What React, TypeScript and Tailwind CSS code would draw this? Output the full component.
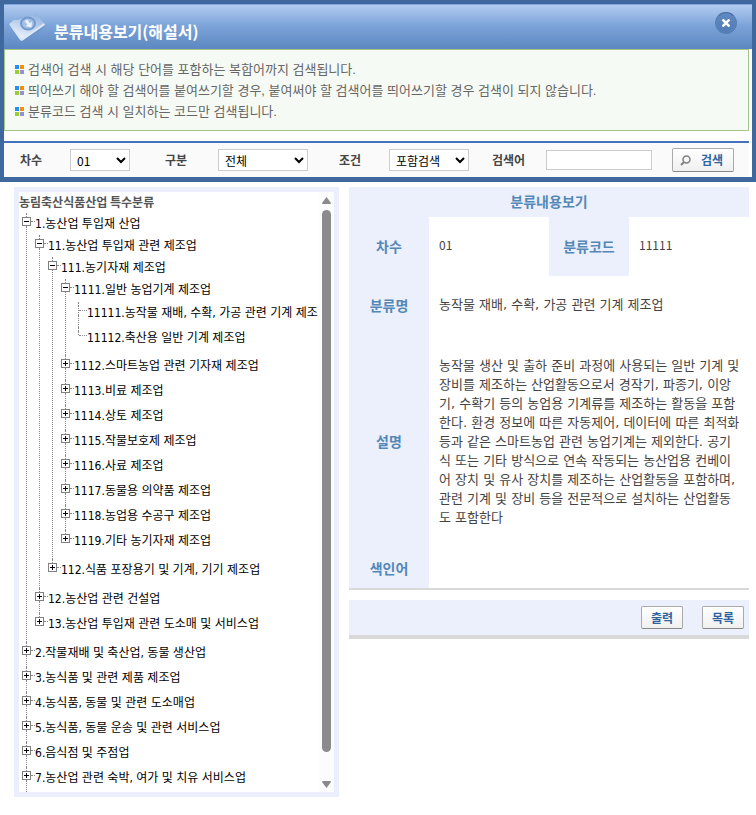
import { useState } from 'react';
import clsx from 'clsx';

type TreeNode = {
  code: string;
  name: string;
  leaf?: boolean;
  children?: TreeNode[];
};

const NOTICES = [
  '검색어 검색 시 해당 단어를 포함하는 복합어까지 검색됩니다.',
  '띄어쓰기 해야 할 검색어를 붙여쓰기할 경우, 붙여써야 할 검색어를 띄어쓰기할 경우 검색이 되지 않습니다.',
  '분류코드 검색 시 일치하는 코드만 검색됩니다.',
];

const TREE: TreeNode[] = [
  {
    code: '1',
    name: '농산업 투입재 산업',
    children: [
      {
        code: '11',
        name: '농산업 투입재 관련 제조업',
        children: [
          {
            code: '111',
            name: '농기자재 제조업',
            children: [
              {
                code: '1111',
                name: '일반 농업기계 제조업',
                children: [
                  { code: '11111', name: '농작물 재배, 수확, 가공 관련 기계 제조', leaf: true },
                  { code: '11112', name: '축산용 일반 기계 제조업', leaf: true },
                ],
              },
              { code: '1112', name: '스마트농업 관련 기자재 제조업' },
              { code: '1113', name: '비료 제조업' },
              { code: '1114', name: '상토 제조업' },
              { code: '1115', name: '작물보호제 제조업' },
              { code: '1116', name: '사료 제조업' },
              { code: '1117', name: '동물용 의약품 제조업' },
              { code: '1118', name: '농업용 수공구 제조업' },
              { code: '1119', name: '기타 농기자재 제조업' },
            ],
          },
          { code: '112', name: '식품 포장용기 및 기계, 기기 제조업' },
        ],
      },
      { code: '12', name: '농산업 관련 건설업' },
      { code: '13', name: '농산업 투입재 관련 도소매 및 서비스업' },
    ],
  },
  { code: '2', name: '작물재배 및 축산업, 동물 생산업' },
  { code: '3', name: '농식품 및 관련 제품 제조업' },
  { code: '4', name: '농식품, 동물 및 관련 도소매업' },
  { code: '5', name: '농식품, 동물 운송 및 관련 서비스업' },
  { code: '6', name: '음식점 및 주점업' },
  { code: '7', name: '농산업 관련 숙박, 여가 및 치유 서비스업' },
];

const DESCRIPTION = [
  '농작물 생산 및 출하 준비 과정에 사용되는 일반 기계 및',
  '장비를 제조하는 산업활동으로서 경작기, 파종기, 이앙',
  '기, 수확기 등의 농업용 기계류를 제조하는 활동을 포함',
  '한다. 환경 정보에 따른 자동제어, 데이터에 따른 최적화',
  '등과 같은 스마트농업 관련 농업기계는 제외한다. 공기',
  '식 또는 기타 방식으로 연속 작동되는 농산업용 컨베이',
  '어 장치 및 유사 장치를 제조하는 산업활동을 포함하며,',
  '관련 기계 및 장비 등을 전문적으로 설치하는 산업활동',
  '도 포함한다',
];

function FolderIcon() {
  return (
    <svg width="36" height="30" viewBox="0 0 36 30" aria-hidden="true">
      <defs>
        <linearGradient id="folder" x1="0.200" y1="1" x2="0.700" y2="0">
          <stop offset="0" stopColor="#f4f8fd" />
          <stop offset="0.450" stopColor="#c5d8f0" />
          <stop offset="1" stopColor="#93b5e2" />
        </linearGradient>
      </defs>
      <path d="M13 30 L36 15 L35 11 L12 25 Z" fill="#5f88c0" opacity="0.5" />
      <path d="M0 12 L5 8 L9 8 L27 2 L35 11 L13 27 Z" fill="url(#folder)" />
      <path d="M0 12 L13 26 L35 11 L36 13 L13 29 L11 28 Z" fill="#dce8f7" />
      <ellipse cx="19" cy="11.500" rx="7" ry="6" fill="#a4c0e6" stroke="#7399cf" strokeWidth="2" />
      <path d="M15.500 9 L18.500 7.500 L20.500 11 L23 10 L22.500 15.500 L16.500 14 L18.500 12.500 Z" fill="#eaf1fa" />
    </svg>
  );
}

function Bullet() {
  return (
    <svg width="9" height="9" viewBox="0 0 9 9" className="shrink-0" aria-hidden="true">
      <rect width="4" height="4" fill="#1e90ff" />
      <rect x="5" width="4" height="4" fill="#ff8c00" />
      <rect y="5" width="4" height="4" fill="#9acd32" />
      <rect x="5" y="5" width="4" height="4" fill="#9590d5" />
    </svg>
  );
}

function SearchIcon() {
  return (
    <svg width="11" height="11" viewBox="0 0 11 11" fill="none" stroke="#808080" aria-hidden="true">
      <circle cx="6.500" cy="4.500" r="3.500" strokeWidth="1.500" />
      <path d="M4 7 L1 10" strokeWidth="2" />
    </svg>
  );
}

function Branch({ node, last }: { node: TreeNode; last: boolean }) {
  const [open, setOpen] = useState(Boolean(node.children));

  return (
    <li className="flex">
      <div className="flex w-[13px] shrink-0 flex-col">
        <div className="ml-1 h-1 border-l border-dotted border-[#888]" />
        <div className="flex h-[9px] items-center">
          {node.leaf ? (
            <>
              <span className={clsx('ml-1 border-l border-dotted border-[#888]', last ? 'h-1 self-start' : 'h-full')} />
              <span className="flex-1 border-t border-dotted border-[#888]" />
            </>
          ) : (
            <>
              <button type="button" aria-label={`${node.code} ${open ? '접기' : '펼치기'}`} onClick={() => setOpen(!open)}>
                <svg width="9" height="9" viewBox="0 0 9 9" className="block" shapeRendering="crispEdges">
                  <rect width="9" height="9" fill="#808080" />
                  <rect x="1" y="1" width="7" height="7" fill="#fff" />
                  <rect x="2" y="4" width="5" height="1" fill="#000" />
                  {!(open && node.children) && <rect x="4" y="2" width="1" height="5" fill="#000" />}
                </svg>
              </button>
              <span className="flex-1 border-t border-dotted border-[#888]" />
            </>
          )}
        </div>
        {!last && <div className="ml-1 flex-1 border-l border-dotted border-[#888]" />}
      </div>
      <div className={clsx(!node.children && 'pb-[3px]')}>
        <a href="#" className="block whitespace-nowrap leading-[22px]">
          {node.code}.{node.name}
        </a>
        {open && node.children && (
          <ul className={node.children[0].leaf ? 'pt-px pb-[3px]' : 'pb-1'}>
            {node.children.map((child, i) => (
              <Branch key={child.code} node={child} last={i === node.children!.length - 1} />
            ))}
          </ul>
        )}
      </div>
    </li>
  );
}

function SearchForm() {
  const control = 'h-[22px] border border-[#ccc] bg-white pl-[2px] text-black';
  const label = 'shrink-0 font-bold text-[#444]';

  return (
    <form
      className="flex items-center border-t-2 border-[#4472bd] bg-[#fafafa] pt-[5px] pb-[5px] pl-4"
      onSubmit={(e) => e.preventDefault()}
    >
      <label htmlFor="level" className={clsx(label, 'w-[50px]')}>차수</label>
      <select id="level" className={clsx(control, 'w-[60px]')}>
        <option>01</option>
      </select>
      <label htmlFor="section" className={clsx(label, 'ml-[35px] w-[53px]')}>구분</label>
      <select id="section" className={clsx(control, 'w-[90px]')}>
        <option>전체</option>
      </select>
      <label htmlFor="condition" className={clsx(label, 'ml-[31px] w-[50px]')}>조건</label>
      <select id="condition" className={clsx(control, 'w-[80px]')}>
        <option>포함검색</option>
      </select>
      <label htmlFor="keyword" className={clsx(label, 'ml-[23px] w-[54px]')}>검색어</label>
      <input id="keyword" type="text" className="h-5 w-[106px] border border-[#ccc] bg-white px-1" />
      <button
        type="submit"
        className="ml-5 flex h-[24px] w-[62px] items-center justify-between rounded-xs border border-[#aaa] border-b-[#888] bg-linear-to-b from-white to-[#f0f0f0] pr-[10px] pl-[7px] font-bold text-[#2f659f]"
      >
        <SearchIcon />
        검색
      </button>
    </form>
  );
}

function Detail() {
  const head = 'bg-[#ecf0fd] pb-[2px] text-center text-sm font-bold text-[#5488b8]';
  const cell = "px-[10px] pb-[2px] font-['DejaVu_Sans','Noto_Sans_CJK_KR',sans-serif] text-[13px] leading-[19px] text-[#444]";
  const code = 'px-[10px] pb-1 text-xs text-[#444]';

  return (
    <table className="w-full table-fixed border-collapse border-b-2 border-[#d9d9d9]">
      <colgroup>
        <col className="w-20" />
        <col />
        <col className="w-20" />
        <col />
      </colgroup>
      <tbody>
        <tr className="h-[30px]">
          <th colSpan={4} className={head}>분류내용보기</th>
        </tr>
        <tr className="h-[59px]">
          <th scope="row" className={head}>차수</th>
          <td className={code}>01</td>
          <th scope="row" className={head}>분류코드</th>
          <td className={code}>11111</td>
        </tr>
        <tr className="h-[59px]">
          <th scope="row" className={head}>분류명</th>
          <td colSpan={3} className={cell}>농작물 재배, 수확, 가공 관련 기계 제조업</td>
        </tr>
        <tr className="h-[214px]">
          <th scope="row" className={head}>설명</th>
          <td colSpan={3} className={clsx(cell, 'whitespace-pre')}>{DESCRIPTION.join('\n')}</td>
        </tr>
        <tr className="h-10">
          <th scope="row" className={head}>색인어</th>
          <td colSpan={3} className={cell} />
        </tr>
      </tbody>
    </table>
  );
}

function FooterButton({ children }: { children: string }) {
  return (
    <button
      type="button"
      className="h-[23px] w-[42px] rounded-xs border border-[#aaa] border-b-[#888] bg-linear-to-b from-white to-[#f0f0f0] font-bold text-[#2f659f]"
    >
      {children}
    </button>
  );
}

export default function App() {
  return (
    <div className="bg-white pb-[18px] font-['Noto_Sans_CJK_KR',sans-serif] text-xs text-black">
      <header className="border-4 border-b-[5px] border-[#3f689f]">
        <div className="flex h-[45px] items-start justify-between border-t border-[#7fa5dc] bg-linear-to-b from-[#b3ccf0] via-[#7ea5da] via-45% to-[#5c87c0] pl-[5px] pr-[15px]">
          <div className="flex pt-[7px]">
            <FolderIcon />
            <h1 className="pt-[7px] pl-[9px] text-base leading-6 font-bold text-white">분류내용보기(해설서)</h1>
          </div>
          <button
            type="button"
            aria-label="닫기"
            className="mt-[7px] flex size-[22px] items-center justify-center rounded-full border border-[#5580b8] border-t-[#44699d] bg-linear-to-b from-[#6088c0] to-[#537db6]"
          >
            <svg width="8" height="8" viewBox="0 0 8 8" stroke="#fff" strokeWidth="2.500" aria-hidden="true">
              <path d="M0.500 0.500 L7.500 7.500 M7.500 0.500 L0.500 7.500" />
            </svg>
          </button>
        </div>
        <div className="pr-[3px]">
          <ul className="mb-[10px] border border-[#a3c585] bg-[#f6faf5] pt-[9px] pb-2 pl-[10px] font-['Liberation_Sans','Noto_Sans_CJK_KR',sans-serif] text-[13px] leading-[21px] text-[#666]">
            {NOTICES.map((text) => (
              <li key={text} className="flex items-center gap-1">
                <Bullet />
                {text}
              </li>
            ))}
          </ul>
          <SearchForm />
        </div>
      </header>

      <main className="flex items-start gap-[10px] pt-[5px] pr-[7px] pl-[14px]">
        <section className="flex h-[610px] w-[325px] shrink-0 border-[5px] border-[#ebeffd]">
          <div className="min-w-0 flex-1 overflow-hidden">
            <h2 className="pb-px leading-5 font-bold text-[#555]">농림축산식품산업 특수분류</h2>
            <ul className="pl-[3px] font-['DejaVu_Sans_Condensed','Noto_Sans_CJK_KR',sans-serif]">
              {TREE.map((node) => (
                <Branch key={node.code} node={node} last={false} />
              ))}
            </ul>
          </div>
          <div className="flex w-[15px] shrink-0 flex-col items-center gap-[6px] bg-[#fcfcfc] pt-[5px] pb-1" aria-hidden="true">
            <svg width="9" height="7" viewBox="0 0 9 7">
              <path d="M4.500 0 L9 6 Q9 7 8 7 L1 7 Q0 7 0 6 Z" fill="#8b8b8b" />
            </svg>
            <div className="mb-[23px] w-[9px] flex-1 rounded-full bg-[#8b8b8b]" />
            <svg width="9" height="7" viewBox="0 0 9 7">
              <path d="M4.500 7 L9 1 Q9 0 8 0 L1 0 Q0 0 0 1 Z" fill="#8b8b8b" />
            </svg>
          </div>
        </section>

        <section className="min-w-0 flex-1">
          <Detail />
          <div className="mt-[10px] flex h-[39px] items-center justify-end gap-[19px] border-b-4 border-[#d9d9d9] bg-[#ecf0fd] pr-[5px]">
            <FooterButton>출력</FooterButton>
            <FooterButton>목록</FooterButton>
          </div>
        </section>
      </main>
    </div>
  );
}
